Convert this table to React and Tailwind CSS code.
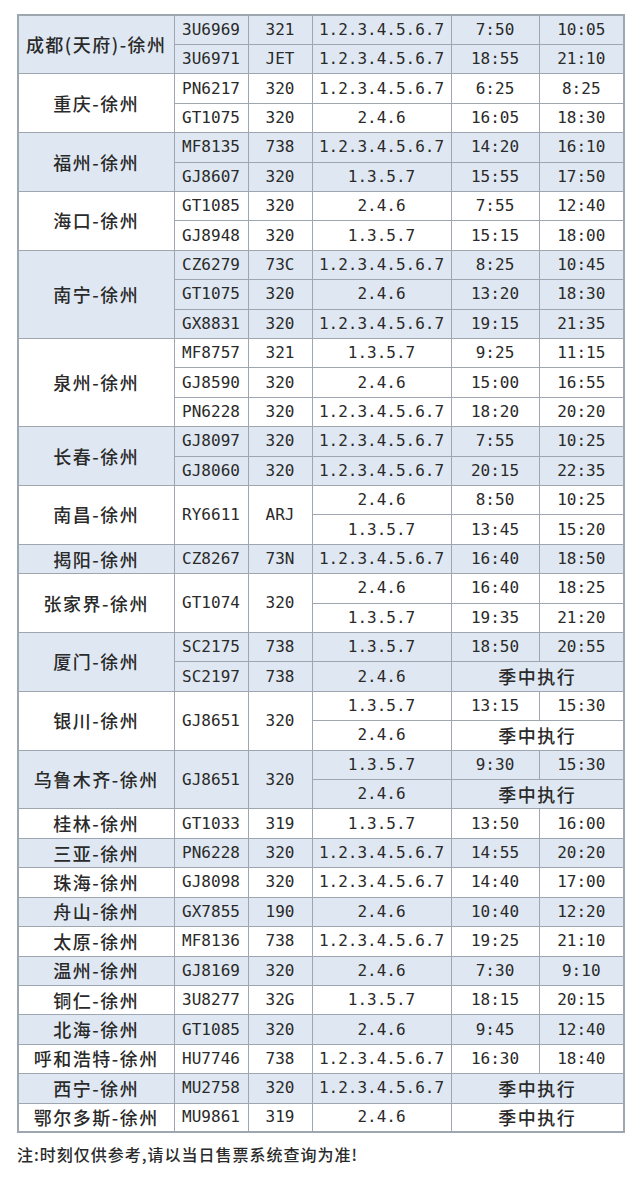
import React from "react";

const ALL = "1.2.3.4.5.6.7";
const ODD = "1.3.5.7";
const EVEN = "2.4.6";

// merge: flight & type span the whole group; null times => 季中执行
const groups = [
  { name: "成都(天府)-徐州", rows: [["3U6969", "321", ALL, "7:50", "10:05"], ["3U6971", "JET", ALL, "18:55", "21:10"]] },
  { name: "重庆-徐州", rows: [["PN6217", "320", ALL, "6:25", "8:25"], ["GT1075", "320", EVEN, "16:05", "18:30"]] },
  { name: "福州-徐州", rows: [["MF8135", "738", ALL, "14:20", "16:10"], ["GJ8607", "320", ODD, "15:55", "17:50"]] },
  { name: "海口-徐州", rows: [["GT1085", "320", EVEN, "7:55", "12:40"], ["GJ8948", "320", ODD, "15:15", "18:00"]] },
  {
    name: "南宁-徐州",
    rows: [["CZ6279", "73C", ALL, "8:25", "10:45"], ["GT1075", "320", EVEN, "13:20", "18:30"], ["GX8831", "320", ALL, "19:15", "21:35"]],
  },
  {
    name: "泉州-徐州",
    rows: [["MF8757", "321", ODD, "9:25", "11:15"], ["GJ8590", "320", EVEN, "15:00", "16:55"], ["PN6228", "320", ALL, "18:20", "20:20"]],
  },
  { name: "长春-徐州", rows: [["GJ8097", "320", ALL, "7:55", "10:25"], ["GJ8060", "320", ALL, "20:15", "22:35"]] },
  { name: "南昌-徐州", merge: true, rows: [["RY6611", "ARJ", EVEN, "8:50", "10:25"], ["RY6611", "ARJ", ODD, "13:45", "15:20"]] },
  { name: "揭阳-徐州", rows: [["CZ8267", "73N", ALL, "16:40", "18:50"]] },
  { name: "张家界-徐州", merge: true, rows: [["GT1074", "320", EVEN, "16:40", "18:25"], ["GT1074", "320", ODD, "19:35", "21:20"]] },
  { name: "厦门-徐州", rows: [["SC2175", "738", ODD, "18:50", "20:55"], ["SC2197", "738", EVEN, null, null]] },
  { name: "银川-徐州", merge: true, rows: [["GJ8651", "320", ODD, "13:15", "15:30"], ["GJ8651", "320", EVEN, null, null]] },
  { name: "乌鲁木齐-徐州", merge: true, rows: [["GJ8651", "320", ODD, "9:30", "15:30"], ["GJ8651", "320", EVEN, null, null]] },
  { name: "桂林-徐州", rows: [["GT1033", "319", ODD, "13:50", "16:00"]] },
  { name: "三亚-徐州", rows: [["PN6228", "320", ALL, "14:55", "20:20"]] },
  { name: "珠海-徐州", rows: [["GJ8098", "320", ALL, "14:40", "17:00"]] },
  { name: "舟山-徐州", rows: [["GX7855", "190", EVEN, "10:40", "12:20"]] },
  { name: "太原-徐州", rows: [["MF8136", "738", ALL, "19:25", "21:10"]] },
  { name: "温州-徐州", rows: [["GJ8169", "320", EVEN, "7:30", "9:10"]] },
  { name: "铜仁-徐州", rows: [["3U8277", "32G", ODD, "18:15", "20:15"]] },
  { name: "北海-徐州", rows: [["GT1085", "320", EVEN, "9:45", "12:40"]] },
  { name: "呼和浩特-徐州", rows: [["HU7746", "738", ALL, "16:30", "18:40"]] },
  { name: "西宁-徐州", rows: [["MU2758", "320", ALL, null, null]] },
  { name: "鄂尔多斯-徐州", rows: [["MU9861", "319", EVEN, null, null]] },
];

const cell = "border-[1.5px] border-[#9ea6b0] text-center align-middle p-0 whitespace-nowrap";
const num = cell + " font-['DejaVu_Sans_Mono',monospace] text-[16px]";
const cjk = cell + " font-['Noto_Sans_CJK_SC',sans-serif] text-[18px] font-medium tracking-[1.5px]";

export default function App() {
  return (
    <div className="w-[640px] h-[1188px] bg-white text-[#2a2a2a] pt-[14px] pl-[17px]">
      <table className="table-fixed border-collapse w-[606px] border-2 border-[#9ea6b0]">
        <colgroup>
          <col className="w-[156px]" />
          <col className="w-[74px]" />
          <col className="w-[64px]" />
          <col className="w-[139px]" />
          <col className="w-[88px]" />
          <col className="w-[85px]" />
        </colgroup>
        <tbody>
          {groups.map((g, gi) => {
            const bg = gi % 2 === 0 ? "bg-[#dfe8f2]" : "bg-white";
            return g.rows.map((r, ri) => (
              <tr key={gi + "-" + ri} className={bg + " h-[29.42px]"}>
                {ri === 0 && (
                  <td rowSpan={g.rows.length} className={cjk}>
                    {g.name}
                  </td>
                )}
                {(!g.merge || ri === 0) && (
                  <td rowSpan={g.merge ? g.rows.length : 1} className={num}>
                    {r[0]}
                  </td>
                )}
                {(!g.merge || ri === 0) && (
                  <td rowSpan={g.merge ? g.rows.length : 1} className={num}>
                    {r[1]}
                  </td>
                )}
                <td className={num}>{r[2]}</td>
                {r[3] ? (
                  <>
                    <td className={num}>{r[3]}</td>
                    <td className={num}>{r[4]}</td>
                  </>
                ) : (
                  <td colSpan={2} className={cjk}>
                    季中执行
                  </td>
                )}
              </tr>
            ));
          })}
        </tbody>
      </table>
      <p className="mt-[9px] font-['Noto_Sans_CJK_SC',sans-serif] text-[16px] font-medium tracking-[1px] text-[#2a2a2a]">
        注:时刻仅供参考,请以当日售票系统查询为准!
      </p>
    </div>
  );
}
